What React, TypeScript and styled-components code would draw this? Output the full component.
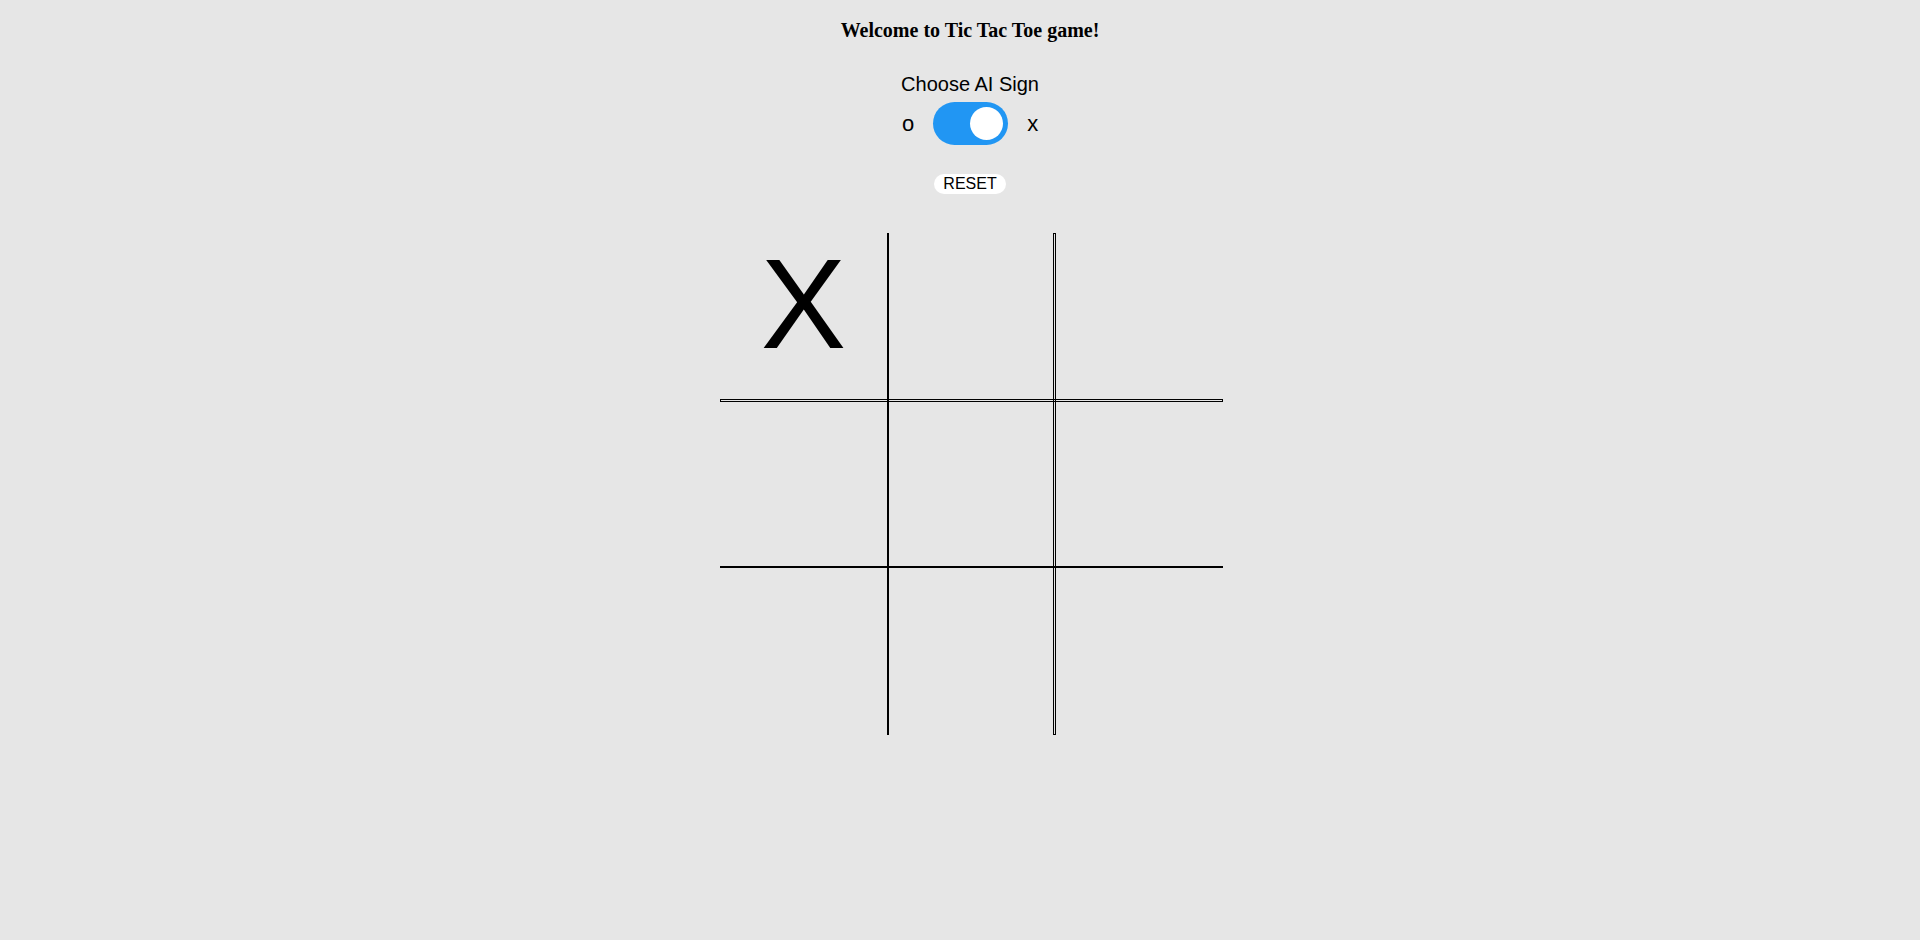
import React, { useState } from "react";
import styled, { createGlobalStyle } from "styled-components";

const GlobalStyle = createGlobalStyle`
  html, body {
    margin: 0;
    padding: 0;
    background: #e6e6e6;
  }
  body {
    font-family: "Liberation Sans", Arial, sans-serif;
    color: #000;
  }
`;

const Page = styled.div`
  display: flex;
  flex-direction: column;
  align-items: center;
  padding: 19px 0 0 20px;
`;

const Title = styled.h3`
  margin: 0;
  font-family: "Liberation Serif", "Times New Roman", serif;
  font-size: 20px;
  font-weight: bold;
`;

const ChooseLabel = styled.div`
  margin-top: 31px;
  font-size: 20px;
`;

const ToggleRow = styled.div`
  display: flex;
  align-items: center;
  gap: 19px;
  margin-top: 6px;
`;

const SignLabel = styled.span`
  font-size: 22px;
`;

const Switch = styled.button<{ $on: boolean }>`
  position: relative;
  width: 75px;
  height: 43px;
  border: none;
  padding: 0;
  border-radius: 22px;
  background: ${(p) => (p.$on ? "#2196f3" : "#ccc")};
  cursor: pointer;
`;

const Knob = styled.span<{ $on: boolean }>`
  position: absolute;
  top: 5px;
  left: ${(p) => (p.$on ? "37px" : "5px")};
  width: 33px;
  height: 33px;
  border-radius: 50%;
  background: #fff;
`;

const ResetButton = styled.button`
  margin-top: 29px;
  font-family: "Liberation Sans", Arial, sans-serif;
  font-size: 16px;
  line-height: 18px;
  padding: 1px 9px;
  border: none;
  border-radius: 10px;
  background: #fff;
  color: #000;
  cursor: pointer;
`;

const Board = styled.div`
  margin-top: 39px;
  margin-left: 3px;
  display: grid;
  grid-template-columns: 167px 2px 164px 3px 167px;
  grid-template-rows: 166px 3px 164px 2px 167px;
`;

const Cell = styled.div<{ $row: number; $col: number }>`
  grid-row: ${(p) => p.$row * 2 + 1};
  grid-column: ${(p) => p.$col * 2 + 1};
  display: flex;
  justify-content: center;
  align-items: flex-start;
  padding-top: 7px;
  font-size: 128px;
  line-height: 128px;
  cursor: pointer;
`;

const SolidLine = styled.div<{ $vertical: boolean; $index: number }>`
  background: #000;
  grid-row: ${(p) => (p.$vertical ? "1 / -1" : p.$index)};
  grid-column: ${(p) => (p.$vertical ? p.$index : "1 / -1")};
`;

const DoubleLine = styled.div<{ $vertical: boolean; $index: number }>`
  box-sizing: border-box;
  border: 1px solid #000;
  grid-row: ${(p) => (p.$vertical ? "1 / -1" : p.$index)};
  grid-column: ${(p) => (p.$vertical ? p.$index : "1 / -1")};
`;

export default function App() {
  const [aiIsX, setAiIsX] = useState(true);
  const [cells, setCells] = useState<string[]>([
    "X", "", "",
    "", "", "",
    "", "", "",
  ]);

  return (
    <>
      <GlobalStyle />
      <Page>
        <Title>Welcome to Tic Tac Toe game!</Title>
        <ChooseLabel>Choose AI Sign</ChooseLabel>
        <ToggleRow>
          <SignLabel>o</SignLabel>
          <Switch $on={aiIsX} onClick={() => setAiIsX(!aiIsX)} aria-label="AI sign">
            <Knob $on={aiIsX} />
          </Switch>
          <SignLabel>x</SignLabel>
        </ToggleRow>
        <ResetButton onClick={() => setCells(Array(9).fill(""))}>RESET</ResetButton>
        <Board>
          <SolidLine $vertical $index={2} />
          <DoubleLine $vertical $index={4} />
          <DoubleLine $vertical={false} $index={2} />
          <SolidLine $vertical={false} $index={4} />
          {cells.map((v, i) => (
            <Cell key={i} $row={Math.floor(i / 3)} $col={i % 3}>
              {v}
            </Cell>
          ))}
        </Board>
      </Page>
    </>
  );
}
